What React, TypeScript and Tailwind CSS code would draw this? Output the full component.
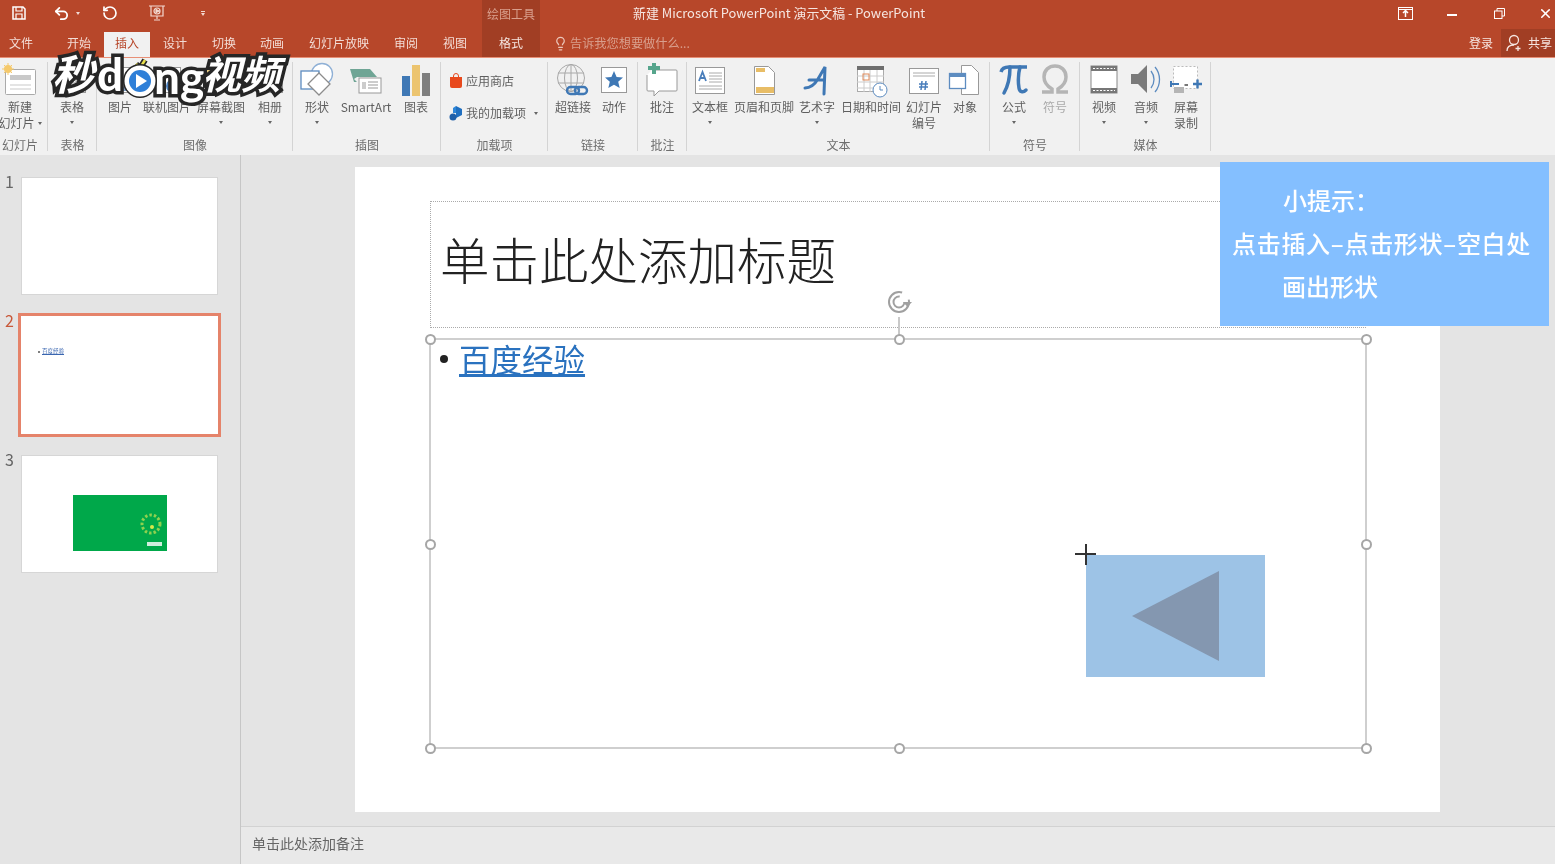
import React from "react";
import { Undo2, RotateCcw, X, Lightbulb } from "lucide-react";

const S = ({ children }: { children: React.ReactNode }) => (
  <svg width="36" height="36" viewBox="0 0 36 36" fill="none" className="overflow-visible">{children}</svg>
);

const icons: Record<string, React.ReactNode> = {
  newslide: (
    <S>
      <rect x="3.5" y="8.5" width="30" height="25" rx="1" fill="#fff" stroke="#aaa" />
      <rect x="8" y="14" width="21" height="5" fill="#c9c9c9" />
      <path d="M8 24h21M8 28h21" stroke="#c9c9c9" />
      <circle cx="6" cy="8" r="4" fill="#f5c96b" />
      <path d="M6 2v12M0 8h12M2 4l8 8M10 4l-8 8" stroke="#f5c96b" />
    </S>
  ),
  table: (
    <S>
      <rect x="4.5" y="6.5" width="27" height="25" fill="#fff" stroke="#999" />
      <path d="M4 14h27M4 22h27M13 7v24M22 7v24" stroke="#999" />
    </S>
  ),
  picture: (
    <S>
      <rect x="4.5" y="6.5" width="27" height="25" fill="#fff" stroke="#999" />
      <path d="M6 30l9-11 6 7 4-4 6 8z" fill="#7f9ec4" />
    </S>
  ),
  online: (
    <S>
      <rect x="4.5" y="6.5" width="27" height="25" fill="#fff" stroke="#999" />
      <circle cx="24" cy="25" r="7" fill="#4a7ebb" />
    </S>
  ),
  shot: (
    <S>
      <rect x="3.5" y="6.5" width="29" height="25" fill="#e7ca84" stroke="#999" />
    </S>
  ),
  album: (
    <S>
      <rect x="6.5" y="6.5" width="24" height="25" fill="#fff" stroke="#999" />
      <rect x="10" y="10" width="17" height="12" fill="#9cb6d3" />
    </S>
  ),
  shapes: (
    <S>
      <circle cx="23" cy="13" r="10.5" fill="#fff" stroke="#8fb0d6" strokeWidth="1.3" />
      <rect x="2" y="10" width="18" height="18" fill="#fff" stroke="#5d8cc0" strokeWidth="1.3" />
      <path d="M20 12l11 11-11 11-11-11z" fill="#fff" stroke="#8c8c8c" strokeWidth="1.3" />
    </S>
  ),
  smartart: (
    <S>
      <path d="M2 8h20l7 8H9l-3 2 3 3H6z" fill="#6fa595" />
      <rect x="11" y="17" width="22" height="15" fill="#fff" stroke="#999" />
      <path d="M20 21h10M20 24h10M20 27h10" stroke="#999" />
      <rect x="14" y="21" width="4" height="7" fill="#ccc" />
    </S>
  ),
  chart: (
    <S>
      <rect x="4" y="15" width="8" height="20" fill="#3f78b5" />
      <rect x="14" y="4" width="8" height="31" fill="#ecc46f" />
      <rect x="24" y="12" width="8" height="23" fill="#7e7e7e" />
    </S>
  ),
  link: (
    <S>
      <circle cx="16" cy="17" r="13.5" stroke="#a8a8a8" />
      <ellipse cx="16" cy="17" rx="6.5" ry="13.5" stroke="#a8a8a8" />
      <path d="M3 12h26M3 22h26M16 3v28" stroke="#a8a8a8" />
      <rect x="12" y="26" width="12" height="7" rx="3.5" stroke="#3f78b5" strokeWidth="2.4" />
      <rect x="20" y="26" width="12" height="7" rx="3.5" stroke="#3f78b5" strokeWidth="2.4" />
    </S>
  ),
  action: (
    <S>
      <rect x="5.5" y="6.5" width="25" height="25" fill="#fff" stroke="#999" />
      <path d="M18 10l2.6 6 6.4.6-4.8 4.2 1.5 6.2-5.7-3.3-5.7 3.3 1.5-6.2-4.8-4.2 6.4-.6z" fill="#3f78b5" />
    </S>
  ),
  comment: (
    <S>
      <path d="M8 9h24a1 1 0 011 1v19a1 1 0 01-1 1H15l-5 5v-5H4a1 1 0 01-1-1V14" fill="#fff" stroke="#999" />
      <path d="M4 7h12M10 2v11" stroke="#56a58c" strokeWidth="4" />
    </S>
  ),
  textbox: (
    <S>
      <rect x="3.5" y="6.5" width="29" height="26" fill="#fff" stroke="#999" />
      <path d="M17 12h13M17 15h13M17 18h13M17 21h13M7 25h23M7 28h23" stroke="#aaa" />
      <path d="M7 20l3.500-9 3.500 9M8.500 17h4" stroke="#4a7ebb" strokeWidth="1.800" />
    </S>
  ),
  header: (
    <S>
      <path d="M8.5 5.5h14l6 6v22h-20z" fill="#fff" stroke="#999" />
      <rect x="10" y="7" width="9" height="4" fill="#e8bd66" />
      <rect x="10" y="26" width="18" height="6" fill="#e8bd66" />
    </S>
  ),
  wordart: (
    <S>
      <path d="M6 27c6 0 10-4 13-9l7-12-1 27M10 19h15" stroke="#3f78b5" strokeWidth="3" strokeLinecap="round" />
    </S>
  ),
  date: (
    <S>
      <rect x="4.5" y="5.5" width="26" height="25" fill="#fff" stroke="#aaa" />
      <rect x="4" y="5" width="27" height="4" fill="#6e6e6e" />
      <path d="M4 15h27M4 21h27M4 27h27M11 9v22M17 9v22M24 9v22" stroke="#ccc" />
      <rect x="10" y="13" width="6" height="6" stroke="#e08a5a" />
      <circle cx="27" cy="29" r="7" fill="#fff" stroke="#5d8cc0" />
      <path d="M27 25v4h3" stroke="#5d8cc0" />
    </S>
  ),
  number: (
    <S>
      <rect x="3.5" y="7.5" width="29" height="25" fill="#fff" stroke="#999" />
      <path d="M7 12h22M7 15h22" stroke="#aaa" />
      <path d="M16 20l-1 9M20 20l-1 9M13 23h9M13 26h9" stroke="#4a7ebb" strokeWidth="1.500" />
    </S>
  ),
  object: (
    <S>
      <path d="M14.5 4.5h10l7 7v22h-17z" fill="#fff" stroke="#999" />
      <rect x="2.5" y="12.5" width="16" height="15" fill="#fff" stroke="#5d8cc0" strokeWidth="1.3" />
      <rect x="2" y="12" width="17" height="4" fill="#5d8cc0" />
    </S>
  ),
  pi: (
    <S>
      <path d="M5 11c1-4 4-5 8-5h18" stroke="#3f78b5" strokeWidth="3.500" />
      <path d="M14 6c0 10-2 19-6 26" stroke="#3f78b5" strokeWidth="3.500" strokeLinecap="round" />
      <path d="M24 6c-2 8-2 15-1 21 .5 4 4 5 7 2" stroke="#3f78b5" strokeWidth="3.500" strokeLinecap="round" />
    </S>
  ),
  omega: (
    <S>
      <path d="M5 31h10v-3c-5-3-8-7-8-12 0-7 5-11 11-11s11 4 11 11c0 5-3 9-8 12v3h10" stroke="#b5b5b5" strokeWidth="3.500" />
    </S>
  ),
  video: (
    <S>
      <rect x="5" y="5" width="26" height="27" fill="#fff" stroke="#888" />
      <rect x="5" y="5" width="26" height="5" fill="#777" />
      <rect x="5" y="27" width="26" height="5" fill="#777" />
      <path d="M7 7.500h22M7 29.500h22" stroke="#fff" strokeDasharray="2 1.500" />
    </S>
  ),
  audio: (
    <S>
      <path d="M3 13h7l9-9v28l-9-9H3z" fill="#7a7a7a" />
      <path d="M23 10c4 5 4 12 0 17M27 6c6 7 6 18 0 25" stroke="#5d8cc0" strokeWidth="1.300" />
    </S>
  ),
  record: (
    <S>
      <rect x="5.500" y="5.500" width="24" height="22" fill="#fff" stroke="#bbb" strokeDasharray="2 2" />
      <path d="M3 20v6M3 23h8" stroke="#3f78b5" strokeWidth="2" />
      <rect x="6" y="26" width="10" height="6" fill="#b5b5b5" />
      <path d="M20 23h-3l-1 1 1 1h3z" fill="#777" />
      <path d="M25 23h9M29.500 18.500v9" stroke="#3f78b5" strokeWidth="2.400" />
    </S>
  ),
};

const Caret = () => (
  <div className="w-0 h-0 border-x-[2.5px] border-x-transparent border-t-[3px] border-t-[#666]" />
);

type It = { w: number; k: string; l: string[]; c?: boolean; m?: boolean };

const Item = ({ w, k, l, c, m }: It) => (
  <div style={{ width: w }} className="flex flex-col items-center pt-[3px] shrink-0">
    <div className="h-[36px] w-[36px]">{icons[k]}</div>
    <div className={`text-[12px] leading-[16px] mt-[2px] text-center whitespace-nowrap ${m ? "text-[#aaaaaa]" : "text-[#5f5f5f]"}`}>
      {l.map((t) => (
        <div key={t}>{t}</div>
      ))}
    </div>
    {c && <div className="mt-[6px]"><Caret /></div>}
  </div>
);

const Group = ({ w, label, pr, children }: { w: number; label: string; pr?: boolean; children: React.ReactNode }) => (
  <div style={{ width: w }} className="shrink-0 h-full flex flex-col relative after:absolute after:right-0 after:top-[4px] after:bottom-[4px] after:w-px after:bg-[#d4d4d4]">
    <div className="h-[79px] flex">{children}</div>
    <div className={`h-[16px] leading-[16px] text-[12px] text-center text-[#6e6e6e] ${pr ? "pr-[8px]" : ""}`}>{label}</div>
  </div>
);

const tabs = [
  { t: "开始", w: 46, ml: 14 },
  { t: "插入", w: 46, ml: 2, a: true },
  { t: "设计", w: 50 },
  { t: "切换", w: 48 },
  { t: "动画", w: 48 },
  { t: "幻灯片放映", w: 86 },
  { t: "审阅", w: 48 },
  { t: "视图", w: 50 },
];

const Handle = ({ x, y }: { x: number; y: number }) => (
  <div
    style={{ left: x - 5.500, top: y - 5.500 }}
    className="absolute w-[11px] h-[11px] rounded-full bg-white border-[2px] border-[#a6a6a6]"
  />
);

const Logo = () => (
  <div className="absolute left-[52px] top-[50px] flex items-center h-[56px] text-white font-bold text-[42px] leading-none [-webkit-text-stroke:7px_#262626] [paint-order:stroke_fill] font-['Noto_Sans_CJK_SC',sans-serif]">
    <span className="w-[45px] italic -mt-[12px]">秒</span>
    <span className="w-[27px] font-['Lato',sans-serif] text-[46px] -mt-[9px]">d</span>
    <div className="relative w-[30px] h-[32px] mt-[8px] shrink-0">
      <svg width="34" height="40" viewBox="0 0 34 40" className="absolute -top-[8px] -left-[1px]">
        <path d="M13 6l4 4 5-8" fill="none" stroke="#262626" strokeWidth="6" />
        <path d="M13 6l4 4 5-8" fill="none" stroke="#e9e04b" strokeWidth="2.500" />
        <circle cx="17" cy="23" r="15.500" fill="#fff" stroke="#262626" strokeWidth="3" />
        <circle cx="17" cy="23" r="11" fill="#2e7fd8" />
        <path d="M13 16l11 7-11 7z" fill="#fff" />
      </svg>
    </div>
    <span className="w-[48px] font-['Lato',sans-serif] text-[46px] -mt-[2px]">ng</span>
    <span className="whitespace-nowrap text-[39px] italic -mt-[12px]">视频</span>
  </div>
);

export default function App() {
  return (
    <div className="relative w-[1555px] h-[864px] overflow-hidden bg-[#e4e4e4] flex flex-col blur-[0.4px] font-['Noto_Sans_CJK_SC','Noto_Sans',sans-serif]">
      {/* Title bar */}
      <div className="h-[29px] bg-[#b7472a] flex items-center text-[#f5e3dd] shrink-0">
        <div className="w-[482px] relative flex items-center h-full pb-[3px]">
          <svg width="16" height="16" viewBox="0 0 16 16" className="ml-[11px]" fill="none" stroke="#fff" strokeWidth="1.500">
            <path d="M2 2h10l2 2v10H2z" />
            <path d="M5 2v4h6V2M5 14V9h6v5" strokeWidth="1.200" />
          </svg>
          <Undo2 size={17} strokeWidth={2.500} className="ml-[26px] text-white" />
          <div className="ml-[6px] w-0 h-0 border-x-[2.500px] border-x-transparent border-t-[3px] border-t-white opacity-80" />
          <RotateCcw size={16} strokeWidth={2.500} className="ml-[22px] text-white" />
          <svg width="18" height="18" viewBox="0 0 18 18" className="ml-[30px]" fill="none" stroke="#f3d9d1" strokeWidth="1.200">
            <path d="M1 2h16M3 2v10h12V2M9 12v3M6 16h6" />
            <circle cx="9" cy="7" r="3" />
            <path d="M8 5.500l3 1.500-3 1.500z" fill="#f3d9d1" />
          </svg>
          <div className="ml-[35px] flex flex-col items-center gap-[1px]">
            <div className="w-[4px] h-px bg-[#f3d9d1]" />
            <div className="w-0 h-0 border-x-[2.500px] border-x-transparent border-t-[3px] border-t-[#f3d9d1]" />
          </div>
        </div>
        <div className="w-[58px] h-full bg-[#a13e24] text-[12px] text-[#d99f8d] flex items-center justify-center whitespace-nowrap pb-[1px]">绘图工具</div>
        <div className="pl-[93px] flex-1 text-[12.900px] text-[#f6e6e1] whitespace-nowrap pb-[3px]">新建 Microsoft PowerPoint 演示文稿 - PowerPoint</div>
        <svg width="15" height="13" viewBox="0 0 15 13" fill="none" className="mr-[34px] mb-[3px]" stroke="#fff">
          <rect x="0.500" y="0.500" width="14" height="12" />
          <path d="M7.500 10V4M5 6l2.500-2.500L10 6" strokeWidth="1.500" />
          <path d="M0.500 2.500h14" />
        </svg>
        <div className="w-[10px] h-[2px] bg-white mr-[37px] mt-[1px]" />
        <svg width="11" height="11" viewBox="0 0 11 11" fill="none" stroke="#fff" className="mr-[33px] mb-[3px]">
          <rect x="0.500" y="3" width="7.500" height="7.500" />
          <path d="M3 3V0.500h7.500V8H8" />
        </svg>
        <X size={15} strokeWidth={2.500} className="text-white mr-[2px] mb-[3px]" />
      </div>

      {/* Tabs */}
      <div className="h-[28px] bg-[#b7472a] flex items-stretch text-[12px] text-[#f3dcd5] shrink-0">
        <div className="w-[42px] flex items-center justify-center">文件</div>
        {tabs.map((t) => (
          <div
            key={t.t}
            style={{ width: t.w, marginLeft: t.ml ?? 0 }}
            className={`flex items-center justify-center whitespace-nowrap ${t.a ? "bg-[#f1f1f1] text-[#b7472a] mt-[3px] pb-[3px]" : ""}`}
          >
            {t.t}
          </div>
        ))}
        <div className="w-[58px] ml-[2px] bg-[#a13e24] flex items-center justify-center text-[#f6e6e1]">格式</div>
        <div className="flex items-center pl-[13px] flex-1 text-[#d99f8d]">
          <Lightbulb size={15} className="text-[#ecc6ba]" />
          <span className="ml-[2px] whitespace-nowrap text-[12.200px]">告诉我您想要做什么...</span>
        </div>
        <div className="flex items-center mr-[8px] text-[#f6e6e1]">登录</div>
        <div className="w-[54px] bg-[#a13e24] flex items-center pl-[5px] text-[#f6e6e1]">
          <svg width="17" height="18" viewBox="0 0 17 18" fill="none" stroke="#f6e6e1" strokeWidth="1.300">
            <circle cx="8" cy="6" r="4.500" />
            <path d="M1 17c0-4 3-6 7-6M12 12v5M9.500 14.500h5" />
          </svg>
          <span className="ml-[5px]">共享</span>
        </div>
      </div>

      {/* Ribbon */}
      <div className="h-[98px] bg-[#f1f1f1] border-t border-t-[#e88f76] flex shrink-0">
        <Group w={48} label="幻灯片" pr>
          <div className="w-[40px] flex flex-col items-center pt-[3px]">
            <div className="h-[36px] w-[36px]">{icons.newslide}</div>
            <div className="text-[12px] leading-[16px] mt-[2px] text-[#5f5f5f] whitespace-nowrap text-center flex flex-col items-center">
              <div>新建</div>
              <div className="flex items-center gap-[3px]">幻灯片<Caret /></div>
            </div>
          </div>
        </Group>
        <Group w={49} label="表格"><Item w={48} k="table" l={["表格"]} c /></Group>
        <Group w={196} label="图像">
          <Item w={46} k="picture" l={["图片"]} />
          <Item w={48} k="online" l={["联机图片"]} />
          <Item w={60} k="shot" l={["屏幕截图"]} c />
          <Item w={38} k="album" l={["相册"]} c />
        </Group>
        <Group w={148} label="插图">
          <Item w={48} k="shapes" l={["形状"]} c />
          <Item w={50} k="smartart" l={["SmartArt"]} />
          <Item w={50} k="chart" l={["图表"]} />
        </Group>
        <Group w={107} label="加载项">
          <div className="flex flex-col pl-[7px] pt-[15px] gap-[16px] text-[12px] leading-[16px] text-[#5f5f5f] whitespace-nowrap">
            <div className="flex items-center gap-[2px]">
              <svg width="16" height="16" viewBox="0 0 16 16">
                <path d="M2 4h12v9a2 2 0 01-2 2H4a2 2 0 01-2-2z" fill="#e8491d" />
                <path d="M5.500 5V3a2.500 2.500 0 015 0v2" fill="none" stroke="#e8491d" />
              </svg>
              应用商店
            </div>
            <div className="flex items-center gap-[2px]">
              <svg width="16" height="16" viewBox="0 0 16 16">
                <path d="M8 1l6 3v6l-6 3z" fill="#1f6fc0" />
                <path d="M8 1L5 3v5h3z" fill="#2e86d8" />
                <circle cx="5" cy="12" r="3.500" fill="#1f5fa8" />
              </svg>
              我的加载项
              <div className="ml-[6px]"><Caret /></div>
            </div>
          </div>
        </Group>
        <Group w={90} label="链接">
          <Item w={50} k="link" l={["超链接"]} />
          <Item w={32} k="action" l={["动作"]} />
        </Group>
        <Group w={49} label="批注"><Item w={48} k="comment" l={["批注"]} /></Group>
        <Group w={303} label="文本">
          <Item w={46} k="textbox" l={["文本框"]} c />
          <Item w={62} k="header" l={["页眉和页脚"]} />
          <Item w={44} k="wordart" l={["艺术字"]} c />
          <Item w={64} k="date" l={["日期和时间"]} />
          <Item w={42} k="number" l={["幻灯片", "编号"]} />
          <Item w={40} k="object" l={["对象"]} />
        </Group>
        <Group w={90} label="符号">
          <Item w={48} k="pi" l={["公式"]} c />
          <Item w={34} k="omega" l={["符号"]} m />
        </Group>
        <Group w={131} label="媒体">
          <Item w={48} k="video" l={["视频"]} c />
          <Item w={36} k="audio" l={["音频"]} c />
          <Item w={44} k="record" l={["屏幕", "录制"]} />
        </Group>
      </div>

      {/* Work area */}
      <div className="flex-1 flex min-h-0">
        <div className="w-[241px] shrink-0 border-r border-r-[#c6c6c6] pt-[22px] flex flex-col gap-[21px]">
          {[1, 2, 3].map((n) => (
            <div key={n} className="flex">
              <div className={`w-[21px] pl-[5px] text-[16px] leading-[11px] -mt-[1px] ${n === 2 ? "text-[#c8593a]" : "text-[#666]"}`}>{n}</div>
              <div className={`w-[197px] h-[118px] bg-white flex justify-center relative ${n === 2 ? "outline-[3px] outline-[#e5836a]" : "border border-[#d6d6d6]"}`}>
                {n === 2 && (
                  <div className="absolute left-[17px] top-[32px] flex items-center gap-[2px]">
                    <div className="w-[2px] h-[2px] rounded-full bg-[#555]" />
                    <div className="text-[5.500px] leading-[7px] text-[#3a66b0] underline">百度经验</div>
                  </div>
                )}
                {n === 3 && (
                  <div className="w-[94px] h-[56px] mt-[39px] bg-[#00a84a]">
                    <svg width="94" height="56" viewBox="0 0 94 56">
                      <circle cx="78" cy="29" r="9" fill="none" stroke="#8fd14f" strokeWidth="3" strokeDasharray="2.500 2" />
                      <circle cx="79" cy="32" r="2" fill="#d8e84a" />
                      <rect x="74" y="47" width="15" height="4" fill="#cfeedd" />
                    </svg>
                  </div>
                )}
              </div>
            </div>
          ))}
        </div>
        <div className="flex-1 flex flex-col min-w-0">
          <div className="flex-1 pt-[12px] pl-[114px]">
            <div className="relative w-[1085px] h-[645px] bg-white">
              <div className="absolute left-[75px] top-[34px] w-[936px] h-[127px] border border-dotted border-[#aaaaaa] flex items-center pl-[9px]">
                <div className="text-[49.500px] leading-none text-[#222] font-light whitespace-nowrap -mt-[12px]">单击此处添加标题</div>
              </div>
              <div className="absolute left-[74px] top-[171px] w-[938px] h-[411px] border-[2px] border-[#cfcfcf]">
                <div className="flex items-center pl-[9px] -mt-[3px]">
                  <div className="w-[8px] h-[8px] rounded-full bg-[#222] mt-[2px]" />
                  <div className="ml-[11px] text-[31.500px] leading-[42px] text-[#2a72bf] underline whitespace-nowrap">百度经验</div>
                </div>
              </div>
              <div className="absolute left-[543px] top-[150px] w-[2px] h-[22px] bg-[#c9c9c9]" />
              <svg width="30" height="26" viewBox="0 0 30 26" fill="none" className="absolute left-[530px] top-[122px]">
                <circle cx="14" cy="13" r="10" stroke="#a0a0a0" strokeWidth="2" strokeDasharray="50 10" />
                <circle cx="14" cy="13" r="5.500" stroke="#a0a0a0" strokeWidth="2" strokeDasharray="26 8" />
                <path d="M18 13h9l-4.500 5z" fill="#a0a0a0" />
              </svg>
              {[
                [75, 172], [544, 172], [1011, 172],
                [75, 377], [1011, 377],
                [75, 581], [544, 581], [1011, 581],
              ].map(([x, y]) => (
                <Handle key={`${x}-${y}`} x={x} y={y} />
              ))}
              <div className="absolute left-[731px] top-[388px] w-[179px] h-[122px] bg-[#9dc3e6]">
                <svg width="179" height="122" viewBox="0 0 179 122">
                  <path d="M46 61l87-45v90z" fill="#8497b0" />
                </svg>
              </div>
              <div className="absolute left-[720px] top-[386px] w-[21px] h-[2px] bg-[#333]" />
              <div className="absolute left-[730px] top-[377px] w-[2px] h-[21px] bg-[#333]" />
            </div>
          </div>
          <div className="h-[38px] shrink-0 bg-[#e9e9e9] border-t border-t-[#d2d2d2] pl-[11px] pb-[5px] flex items-center text-[14px] text-[#666]">单击此处添加备注</div>
        </div>
      </div>

      {/* Watermark */}
      <Logo />

      {/* Tip overlay */}
      <div className="absolute left-[1220px] top-[162px] w-[329px] h-[164px] bg-[#84bfff] text-white font-medium text-[24px] leading-[43px] pt-[16px] pl-[12px] whitespace-nowrap">
        <div className="pl-[51px]">小提示：</div>
        <div className="tracking-[0.7px]">点击插入–点击形状–空白处</div>
        <div className="pl-[50px]">画出形状</div>
      </div>
    </div>
  );
}
